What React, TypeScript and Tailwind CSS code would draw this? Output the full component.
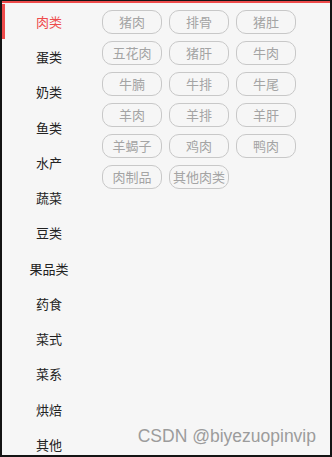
import React, { useState } from 'react'

const categories = ['肉类', '蛋类', '奶类', '鱼类', '水产', '蔬菜', '豆类', '果品类', '药食', '菜式', '菜系', '烘焙', '其他']

const meatTags = [
    '猪肉',
    '排骨',
    '猪肚',
    '五花肉',
    '猪肝',
    '牛肉',
    '牛腩',
    '牛排',
    '牛尾',
    '羊肉',
    '羊排',
    '羊肝',
    '羊蝎子',
    '鸡肉',
    '鸭肉',
    '肉制品',
    '其他肉类',
]

const App = () => {
    const [active, setActive] = useState(0)

    return (
        <div
            className="relative flex h-[457px] w-[332px] flex-col border-t border-r-2 border-b-2 border-l-2 border-[#141414] bg-[#f6f6f6]"
            style={{ fontFamily: '"Noto Sans CJK SC", "Noto Sans", sans-serif' }}
        >
            <div className="flex flex-1 border-t-2 border-[#ee4b4b]">
                <div className="flex w-[94px] flex-col pt-[1px]">
                    {categories.map((name, i) => (
                        <button
                            key={name}
                            onClick={() => setActive(i)}
                            className={
                                i === active
                                    ? 'flex h-[35.25px] items-center justify-center border-l-[3px] border-[#ee4b4b] pr-[3px] text-[13px] text-[#ee4b4b]'
                                    : 'flex h-[35.25px] items-center justify-center text-[13px] text-[#222]'
                            }
                        >
                            {name}
                        </button>
                    ))}
                </div>
                <div className="ml-[6px] pt-[7px]">
                    <div className="grid grid-cols-[60px_60px_60px] gap-x-[7px] gap-y-[7px]">
                        {meatTags.map((tag) => (
                            <div
                                key={tag}
                                className="flex h-[24px] items-center justify-center rounded-[10px] border border-[#c8c8c8] text-[13px] whitespace-nowrap text-[#a4a4a4]"
                            >
                                {tag}
                            </div>
                        ))}
                    </div>
                </div>
            </div>
            <div
                className="absolute right-[14px] bottom-[6px] text-[17.5px] text-[#9c9c9c]"
                style={{ fontFamily: '"Liberation Sans", Arial, sans-serif' }}
            >
                CSDN @biyezuopinvip
            </div>
        </div>
    )
}

export default App
